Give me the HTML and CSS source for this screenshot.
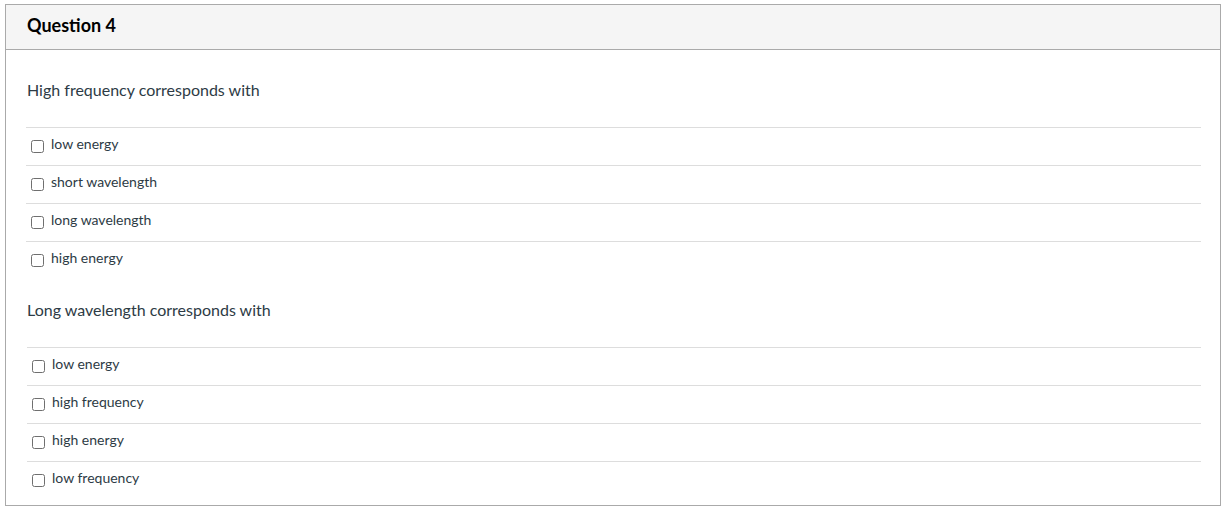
FILE: index.html
```html
<!DOCTYPE html>
<html>
<head>
<meta charset="utf-8">
<link rel="stylesheet" href="styles.css">
</head>
<body>
<div class="quiz">
  <div class="quiz-header"><h2 class="quiz-title">Question 4</h2></div>
  <div class="quiz-body">
    <div class="question">
      <p class="question-text">High frequency corresponds with</p>
      <ul class="answers">
        <li class="answer"><span class="box"></span><span class="label">low energy</span></li>
        <li class="answer"><span class="box"></span><span class="label">short wavelength</span></li>
        <li class="answer"><span class="box"></span><span class="label">long wavelength</span></li>
        <li class="answer"><span class="box"></span><span class="label">high energy</span></li>
      </ul>
    </div>
    <div class="question second">
      <p class="question-text">Long wavelength corresponds with</p>
      <ul class="answers">
        <li class="answer"><span class="box"></span><span class="label">low energy</span></li>
        <li class="answer"><span class="box"></span><span class="label">high frequency</span></li>
        <li class="answer"><span class="box"></span><span class="label">high energy</span></li>
        <li class="answer"><span class="box"></span><span class="label">low frequency</span></li>
      </ul>
    </div>
  </div>
</div>
</body>
</html>
```
FILE: styles.css
```css
html, body {
  margin: 0;
  padding: 0;
  background: #fff;
}
body {
  font-family: Lato, "Open Sans", sans-serif;
  color: #2d3b45;
}
.quiz {
  box-sizing: border-box;
  width: 1216px;
  margin: 4px 0 0 5px;
  border: 1px solid #aaaaaa;
}
.quiz-header {
  box-sizing: border-box;
  height: 45px;
  background: #f5f5f5;
  border-bottom: 1px solid #aaaaaa;
  display: flex;
  align-items: center;
  padding: 0 0 4px 21px;
}
.quiz-title {
  margin: 0;
  font-size: 18px;
  font-weight: 700;
  color: #000;
  line-height: 24px;
}
.quiz-body {
  padding: 28px 19px 6px 20px;
}
.question + .question {
  margin-top: 19px;
}
.question-text {
  margin: 0 0 25px 1px;
  font-size: 16px;
  line-height: 24px;
}
.answers {
  list-style: none;
  margin: 0;
  padding: 0;
}
.answer {
  height: 37px;
  border-top: 1px solid #dddddd;
  display: flex;
  align-items: center;
  padding-left: 5px;
  font-size: 14px;
}
.second .answers {
  margin-left: 1px;
}
.box {
  box-sizing: border-box;
  width: 13px;
  height: 13px;
  border: 1px solid #6f6f6f;
  border-radius: 2.5px;
  margin-right: 7px;
  flex: none;
}
.label {
  line-height: 20px;
  margin-bottom: 5px;
}
```
